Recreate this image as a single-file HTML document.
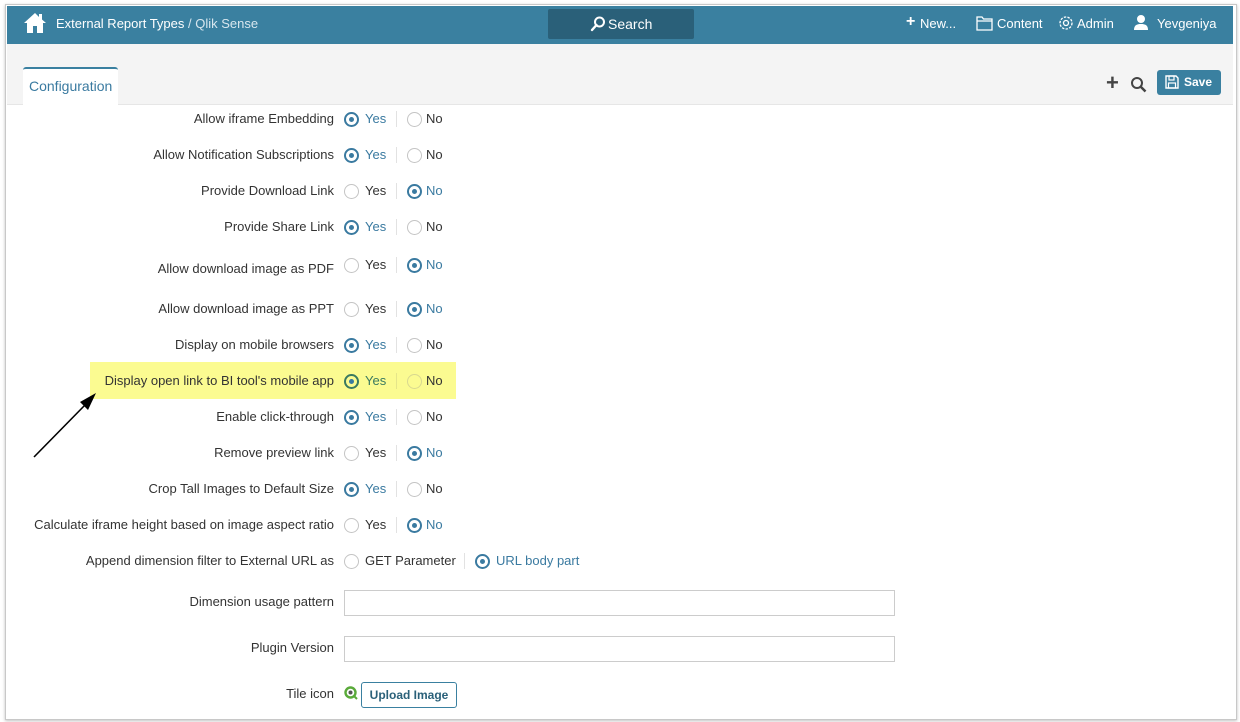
<!DOCTYPE html>
<html><head><meta charset="utf-8"><style>
*{box-sizing:border-box;margin:0;padding:0}
body{width:1240px;height:722px;background:#fff;font-family:"Liberation Sans",Arial,sans-serif;font-size:13px;color:#333;position:relative;overflow:hidden}
.frame{position:absolute;left:5px;top:4px;width:1232px;height:716px;border:1px solid #c8c8c8;box-shadow:0 1px 3px rgba(0,0,0,.25)}
.hdr{position:absolute;left:7px;top:6px;width:1226px;height:38px;background:#3a80a0}
.hdr .t{position:absolute;top:10px;color:#fff;font-size:13px}
.gray{position:absolute;left:7px;top:44px;width:1226px;height:61px;background:#f4f4f4;border-bottom:1px solid #e6e6e6}
.tab{position:absolute;left:23px;top:67px;width:95px;height:39px;background:#fff;border-top:2px solid #3a80a0;border-radius:3px 3px 0 0;color:#3a7aa0;font-size:14px;padding:9px 0 0 6px}
.row{position:absolute;height:16px;line-height:16px;left:0;width:900px}
.lab{position:absolute;right:566px;white-space:nowrap;width:400px;text-align:right}
.r{position:absolute;top:1px;width:15px;height:15px;border:1px solid #c4c4c4;border-radius:50%;background:#fff}
.r.on{border:2px solid #3a7aa0}
.r.on::after{content:"";position:absolute;left:3px;top:3px;width:5px;height:5px;border-radius:50%;background:#3a7aa0}
.o{position:absolute;white-space:nowrap}
.o.on{color:#3a7aa0}
.sep{position:absolute;left:396px;top:0;width:1px;height:16px;background:#e2e2e2}
.inp{position:absolute;left:344px;width:551px;height:26px;border:1px solid #ccc;background:#fff}
</style></head><body>
<div class="frame"></div>
<div class="hdr">
<svg style="position:absolute;left:16px;top:6px" width="24" height="22" viewBox="0 0 24 22"><path d="M12 1 L1 11 L4 11 L4 21 L10 21 L10 14 L14 14 L14 21 L20 21 L20 11 L23 11 L19 7.5 L19 2 L16 2 L16 5 Z" fill="#fff"/></svg>
<div class="t" style="left:49px">External Report Types <span style="color:#d7e6ee">/ Qlik Sense</span></div>
<div style="position:absolute;left:541px;top:3px;width:146px;height:30px;background:#2a6079;border-radius:2px;color:#fff;font-size:14px;line-height:30px;padding-left:60px">Search</div>
<svg style="position:absolute;left:583px;top:10px" width="16" height="16" viewBox="0 0 16 16"><circle cx="9.5" cy="6" r="4.5" fill="none" stroke="#fff" stroke-width="2"/><path d="M6.5 9 L2 14" stroke="#fff" stroke-width="2.4" stroke-linecap="round"/></svg>
<div class="t" style="left:899px;font-weight:bold;font-size:16px;top:7px">+</div>
<div class="t" style="left:913px">New...</div>
<svg style="position:absolute;left:969px;top:10px" width="17" height="15" viewBox="0 0 17 15"><path d="M1 1h5l1.5 2H16v11H1z M1 5H16" fill="none" stroke="#fff" stroke-width="1.3"/></svg>
<div class="t" style="left:990px">Content</div>
<svg style="position:absolute;left:1051px;top:9px" width="16" height="16" viewBox="0 0 16 16"><circle cx="8" cy="8" r="2.5" fill="none" stroke="#fff" stroke-width="1.3"/><circle cx="8" cy="8" r="6" fill="none" stroke="#fff" stroke-width="1.3" stroke-dasharray="2.4 1.3"/></svg>
<div class="t" style="left:1070px">Admin</div>
<svg style="position:absolute;left:1126px;top:8px" width="16" height="17" viewBox="0 0 16 17"><circle cx="8" cy="5" r="4" fill="#fff"/><path d="M1 16c0-5 3-6 7-6s7 1 7 6z" fill="#fff"/></svg>
<div class="t" style="left:1150px">Yevgeniya</div>
</div>
<div class="gray"></div>
<div class="tab">Configuration</div>
<div style="position:absolute;left:1106px;top:73px;font-size:22px;font-weight:bold;color:#444;line-height:20px">+</div>
<svg style="position:absolute;left:1130px;top:76px" width="17" height="17" viewBox="0 0 17 17"><circle cx="7" cy="7" r="5" fill="none" stroke="#444" stroke-width="2"/><path d="M11 11 L15.5 15.5" stroke="#444" stroke-width="2.5"/></svg>
<div style="position:absolute;left:1157px;top:70px;width:64px;height:25px;background:#3a80a0;border-radius:3px;color:#fff;font-weight:bold;font-size:12px;line-height:25px;padding-left:27px">Save</div>
<svg style="position:absolute;left:1165px;top:75px" width="14" height="14" viewBox="0 0 14 14"><path d="M1 1h10l2 2v10H1z" fill="none" stroke="#fff" stroke-width="1.4"/><rect x="4" y="1" width="5" height="4" fill="none" stroke="#fff" stroke-width="1.2"/><rect x="3.5" y="8" width="7" height="5" fill="none" stroke="#fff" stroke-width="1.2"/></svg>
<div style="position:absolute;left:90px;top:362px;width:366px;height:37px;background:#fbfb91"></div>
<svg style="position:absolute;left:0;top:380px" width="110" height="90" viewBox="0 380 110 90"><path d="M34 457 L86 404" stroke="#000" stroke-width="1.6"/><path d="M96 393 L80 402 L88 410 Z" fill="#000"/></svg>

<div class="row" style="top:111px"><div class="lab">Allow iframe Embedding</div><div class="r on" style="left:344px"></div><div class="o on" style="left:365px">Yes</div><div class="sep"></div><div class="r" style="left:407px"></div><div class="o" style="left:426px">No</div></div>
<div class="row" style="top:147px"><div class="lab">Allow Notification Subscriptions</div><div class="r on" style="left:344px"></div><div class="o on" style="left:365px">Yes</div><div class="sep"></div><div class="r" style="left:407px"></div><div class="o" style="left:426px">No</div></div>
<div class="row" style="top:183px"><div class="lab">Provide Download Link</div><div class="r" style="left:344px"></div><div class="o" style="left:365px">Yes</div><div class="sep"></div><div class="r on" style="left:407px"></div><div class="o on" style="left:426px">No</div></div>
<div class="row" style="top:219px"><div class="lab">Provide Share Link</div><div class="r on" style="left:344px"></div><div class="o on" style="left:365px">Yes</div><div class="sep"></div><div class="r" style="left:407px"></div><div class="o" style="left:426px">No</div></div>
<div class="row" style="top:257px"><div class="lab" style="top:4px">Allow download image as PDF</div><div class="r" style="left:344px"></div><div class="o" style="left:365px">Yes</div><div class="sep"></div><div class="r on" style="left:407px"></div><div class="o on" style="left:426px">No</div></div>
<div class="row" style="top:301px"><div class="lab">Allow download image as PPT</div><div class="r" style="left:344px"></div><div class="o" style="left:365px">Yes</div><div class="sep"></div><div class="r on" style="left:407px"></div><div class="o on" style="left:426px">No</div></div>
<div class="row" style="top:337px"><div class="lab">Display on mobile browsers</div><div class="r on" style="left:344px"></div><div class="o on" style="left:365px">Yes</div><div class="sep"></div><div class="r" style="left:407px"></div><div class="o" style="left:426px">No</div></div>
<div class="row" style="top:373px"><div class="lab">Display open link to BI tool's mobile app</div><div class="r on" style="left:344px;border-color:#3a7a60;background:none"></div><div class="o on" style="left:365px;color:#3a7a60">Yes</div><div class="sep" style="background:#e5e58a"></div><div class="r" style="left:407px;background:none;border-color:#d8d890"></div><div class="o" style="left:426px">No</div></div>
<div class="row" style="top:409px"><div class="lab">Enable click-through</div><div class="r on" style="left:344px"></div><div class="o on" style="left:365px">Yes</div><div class="sep"></div><div class="r" style="left:407px"></div><div class="o" style="left:426px">No</div></div>
<div class="row" style="top:445px"><div class="lab">Remove preview link</div><div class="r" style="left:344px"></div><div class="o" style="left:365px">Yes</div><div class="sep"></div><div class="r on" style="left:407px"></div><div class="o on" style="left:426px">No</div></div>
<div class="row" style="top:481px"><div class="lab">Crop Tall Images to Default Size</div><div class="r on" style="left:344px"></div><div class="o on" style="left:365px">Yes</div><div class="sep"></div><div class="r" style="left:407px"></div><div class="o" style="left:426px">No</div></div>
<div class="row" style="top:517px"><div class="lab">Calculate iframe height based on image aspect ratio</div><div class="r" style="left:344px"></div><div class="o" style="left:365px">Yes</div><div class="sep"></div><div class="r on" style="left:407px"></div><div class="o on" style="left:426px">No</div></div>
<div class="row" style="top:553px"><div class="lab">Append dimension filter to External URL as</div><div class="r" style="left:344px"></div><div class="o" style="left:365px">GET Parameter</div><div class="sep" style="left:464px"></div><div class="r on" style="left:475px"></div><div class="o on" style="left:496px">URL body part</div></div>
<div class="row" style="top:594px"><div class="lab">Dimension usage pattern</div></div>
<div class="inp" style="top:590px"></div>
<div class="row" style="top:640px"><div class="lab">Plugin Version</div></div>
<div class="inp" style="top:636px"></div>
<div class="row" style="top:686px"><div class="lab">Tile icon</div></div>
<svg style="position:absolute;left:344px;top:686px" width="14" height="14" viewBox="0 0 14 14"><circle cx="6.5" cy="6.5" r="5" fill="none" stroke="#5aaa3a" stroke-width="2.4"/><circle cx="6.5" cy="6.5" r="2" fill="#555"/><path d="M10 10 L13 13" stroke="#5aaa3a" stroke-width="2"/></svg>
<div style="position:absolute;left:361px;top:682px;width:96px;height:26px;border:1px solid #3a80a0;border-radius:3px;color:#2a6079;font-weight:bold;font-size:12px;line-height:24px;text-align:center">Upload Image</div>
</body></html>
